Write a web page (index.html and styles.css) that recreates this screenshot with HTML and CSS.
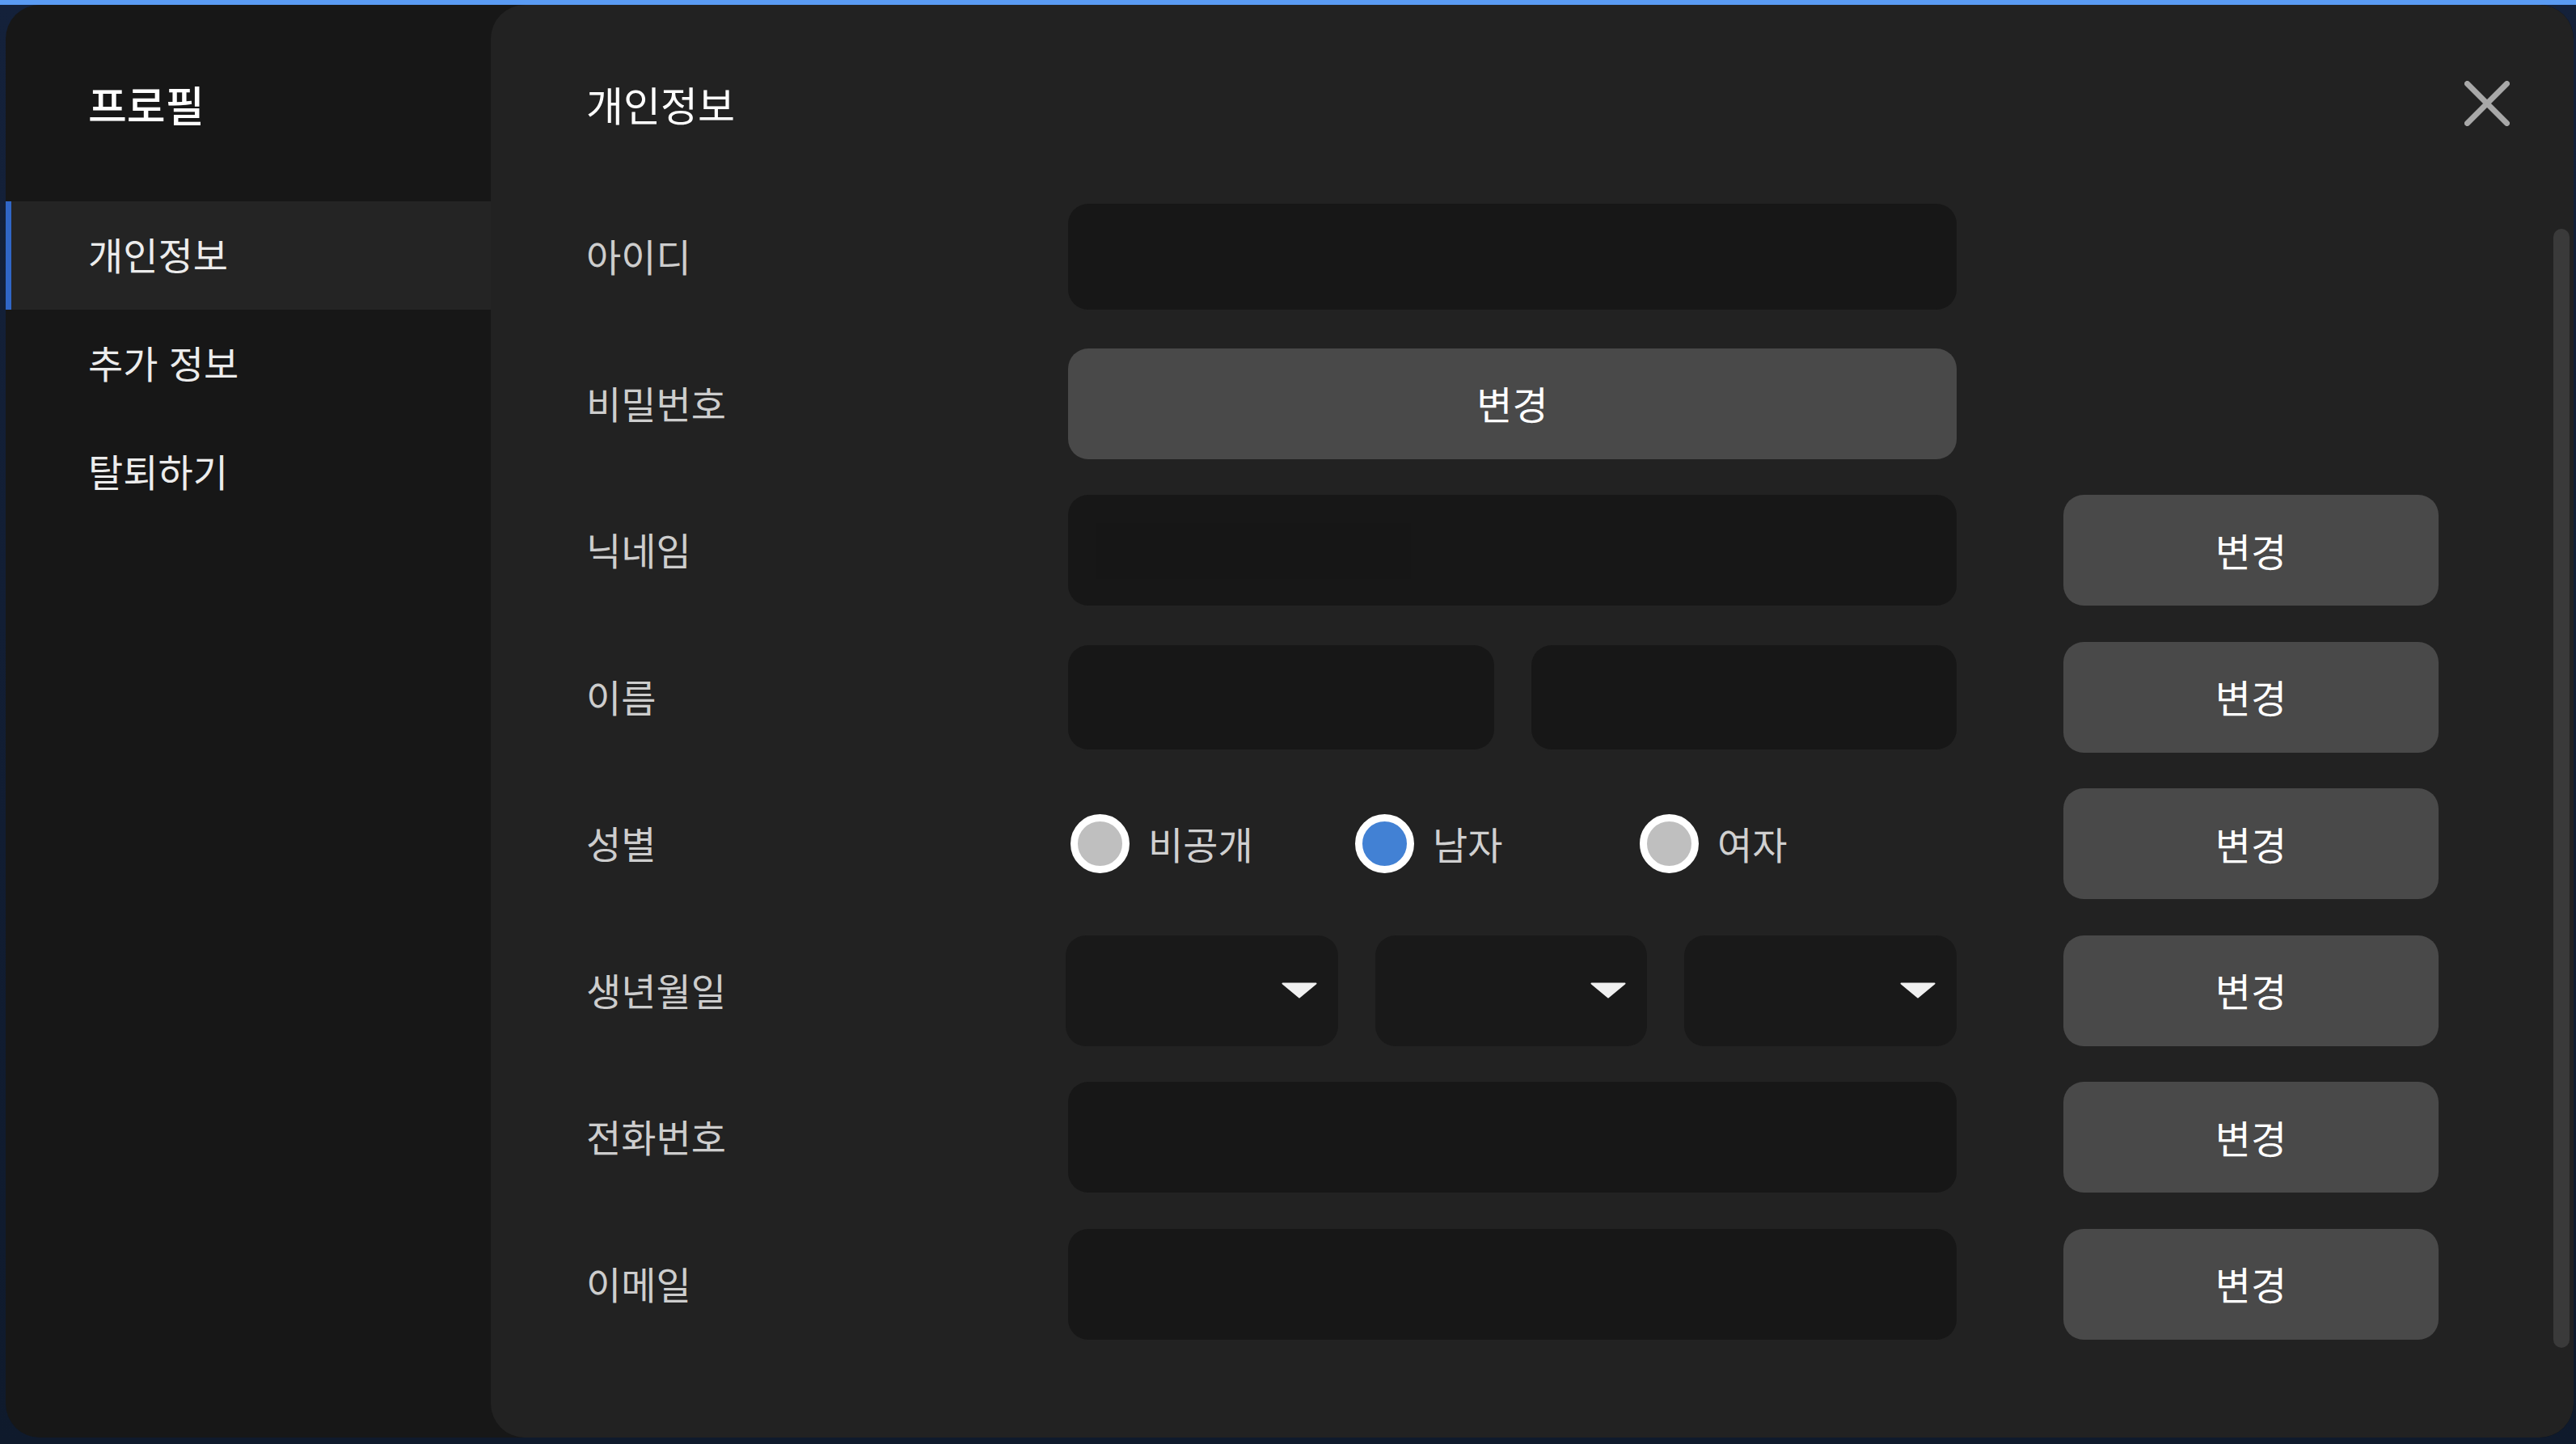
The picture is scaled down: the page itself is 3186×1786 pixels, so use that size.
FILE: index.html
```html
<!DOCTYPE html>
<html lang="ko">
<head>
<meta charset="utf-8">
<title>프로필</title>
<link rel="stylesheet" href="styles.css">
</head>
<body>
<div class="modal">
  <aside class="sidebar">
    <div class="side-head"><h1 class="side-title">프로필</h1></div>
    <nav class="side-nav">
      <div class="side-item active">개인정보</div>
      <div class="side-item">추가 정보</div>
      <div class="side-item">탈퇴하기</div>
    </nav>
  </aside>
  <main class="panel">
    <header class="panel-head">
      <h2 class="panel-title">개인정보</h2>
      <button class="close" aria-label="닫기">
        <svg width="56" height="56" viewBox="0 0 56 56"><path d="M3.5 3.5 L52.5 52.5 M52.5 3.5 L3.5 52.5" stroke="#a8a8a8" stroke-width="7" stroke-linecap="round" fill="none"/></svg>
      </button>
    </header>
    <div class="form">
      <div class="label">아이디</div>
      <div class="field"><div class="input input-id"></div></div>

      <div class="label">비밀번호</div>
      <div class="field"><button class="btn btn-wide">변경</button></div>

      <div class="label">닉네임</div>
      <div class="field"><div class="input input-full"><div class="inner"></div></div></div>
      <button class="btn side-btn">변경</button>

      <div class="label">이름</div>
      <div class="field pair">
        <div class="input input-name"></div>
        <div class="input input-name"></div>
      </div>
      <button class="btn side-btn">변경</button>

      <div class="label">성별</div>
      <div class="field radios">
        <div class="radio"><span class="dot"></span><span>비공개</span></div>
        <div class="radio"><span class="dot on"></span><span>남자</span></div>
        <div class="radio"><span class="dot"></span><span>여자</span></div>
      </div>
      <button class="btn side-btn">변경</button>

      <div class="label">생년월일</div>
      <div class="field selects">
        <div class="select"><svg width="44" height="20" viewBox="0 0 44 20"><path d="M1.5 1.5 L42.5 1.5 L22 18.5 Z" fill="#f0f0f0" stroke="#f0f0f0" stroke-width="2" stroke-linejoin="round"/></svg></div>
        <div class="select"><svg width="44" height="20" viewBox="0 0 44 20"><path d="M1.5 1.5 L42.5 1.5 L22 18.5 Z" fill="#f0f0f0" stroke="#f0f0f0" stroke-width="2" stroke-linejoin="round"/></svg></div>
        <div class="select"><svg width="44" height="20" viewBox="0 0 44 20"><path d="M1.5 1.5 L42.5 1.5 L22 18.5 Z" fill="#f0f0f0" stroke="#f0f0f0" stroke-width="2" stroke-linejoin="round"/></svg></div>
      </div>
      <button class="btn side-btn">변경</button>

      <div class="label">전화번호</div>
      <div class="field"><div class="input input-full"></div></div>
      <button class="btn side-btn">변경</button>

      <div class="label">이메일</div>
      <div class="field"><div class="input input-full"></div></div>
      <button class="btn side-btn">변경</button>
    </div>
    <div class="scrollbar"></div>
  </main>
</div>
</body>
</html>
```
FILE: styles.css
```css
html, body {
  margin: 0;
  height: 100%;
}
body {
  box-sizing: border-box;
  padding: 6px 3px 0 7px;
  background: linear-gradient(#5a9bf3 0, #5a9bf3 6px, #14213a 6px, #0f1a2c 100%);
  font-family: "Noto Sans CJK KR", "Noto Sans", sans-serif;
  overflow: hidden;
}
.modal {
  display: flex;
  width: 3176px;
  height: 1772px;
  background: #171717;
  border-radius: 42px;
  overflow: hidden;
}
.sidebar {
  width: 600px;
  flex: none;
}
.side-head {
  height: 243px;
  box-sizing: border-box;
  padding: 2px 0 0 102px;
  display: flex;
  align-items: center;
}
.side-title {
  margin: 0;
  font-size: 52px;
  font-weight: 500;
  line-height: 1;
  color: #ffffff;
}
.side-item {
  height: 134px;
  box-sizing: border-box;
  display: flex;
  align-items: center;
  padding: 0 0 6px 102px;
  font-size: 47px;
  line-height: 1;
  color: #ececec;
}
.side-item.active {
  background: #242424;
  border-left: 7px solid #3066c6;
  padding-left: 95px;
}
.panel {
  flex: 1;
  position: relative;
  background: #222222;
  border-radius: 42px;
  padding-left: 118px;
}
.panel-head {
  height: 243px;
  box-sizing: border-box;
  padding: 0 79px 0 0;
  display: flex;
  align-items: center;
  justify-content: space-between;
}
.panel-title {
  margin: 0;
  font-size: 50px;
  font-weight: 400;
  line-height: 1;
  color: #ffffff;
}
.close {
  width: 56px;
  height: 56px;
  padding: 0;
  margin-top: 1px;
  border: none;
  background: none;
  display: block;
}
.close svg { display: block; }
.form {
  display: grid;
  grid-template-columns: 464px 1099px 464px;
  column-gap: 132px;
  grid-auto-rows: 137px;
  row-gap: 44.5px;
}
.label {
  grid-column: 1;
  align-self: center;
  margin-bottom: 4px;
  font-size: 47px;
  line-height: 1;
  color: #cdcdcd;
}
.field {
  grid-column: 2;
  display: flex;
  align-items: center;
}
.side-btn {
  grid-column: 3;
}
.input {
  background: #171717;
  border-radius: 25px;
}
.input-id {
  width: 100%;
  height: 131px;
}
.input-full {
  width: 100%;
  height: 137px;
  position: relative;
}
.inner {
  position: absolute;
  left: 34px;
  top: 35px;
  width: 390px;
  height: 69px;
  background: #161616;
}
.pair {
  gap: 46px;
}
.input-name {
  flex: 1;
  height: 129px;
}
.btn {
  border: none;
  padding: 0 0 2px;
  background: #494949;
  border-radius: 25px;
  color: #ffffff;
  font-family: inherit;
  font-size: 48px;
  line-height: 1;
  display: flex;
  align-items: center;
  justify-content: center;
}
.btn-wide {
  width: 100%;
  height: 137px;
}
.radios {
  padding-left: 3px;
}
.radio {
  width: 352px;
  flex: none;
  display: flex;
  align-items: center;
  gap: 23px;
  font-size: 47px;
  line-height: 1;
  color: #d0d0d0;
}
.radio span:last-child {
  margin-bottom: 3px;
}
.dot {
  width: 73px;
  height: 73px;
  box-sizing: border-box;
  border-radius: 50%;
  border: 9px solid #ffffff;
  background: #bfbfbf;
  flex: none;
}
.dot.on {
  background: #4281d4;
}
.selects {
  display: grid;
  grid-template-columns: 1fr 1fr 1fr;
  gap: 46px;
  align-items: stretch;
  margin-left: -3px;
}
.select {
  background: #191919;
  border-radius: 25px;
  display: flex;
  align-items: center;
  justify-content: flex-end;
  padding-right: 26px;
}
.select svg { display: block; }
.scrollbar {
  position: absolute;
  right: 5px;
  top: 277px;
  width: 20px;
  height: 1384px;
  border-radius: 10px;
  background: #3a3a3a;
}
```
